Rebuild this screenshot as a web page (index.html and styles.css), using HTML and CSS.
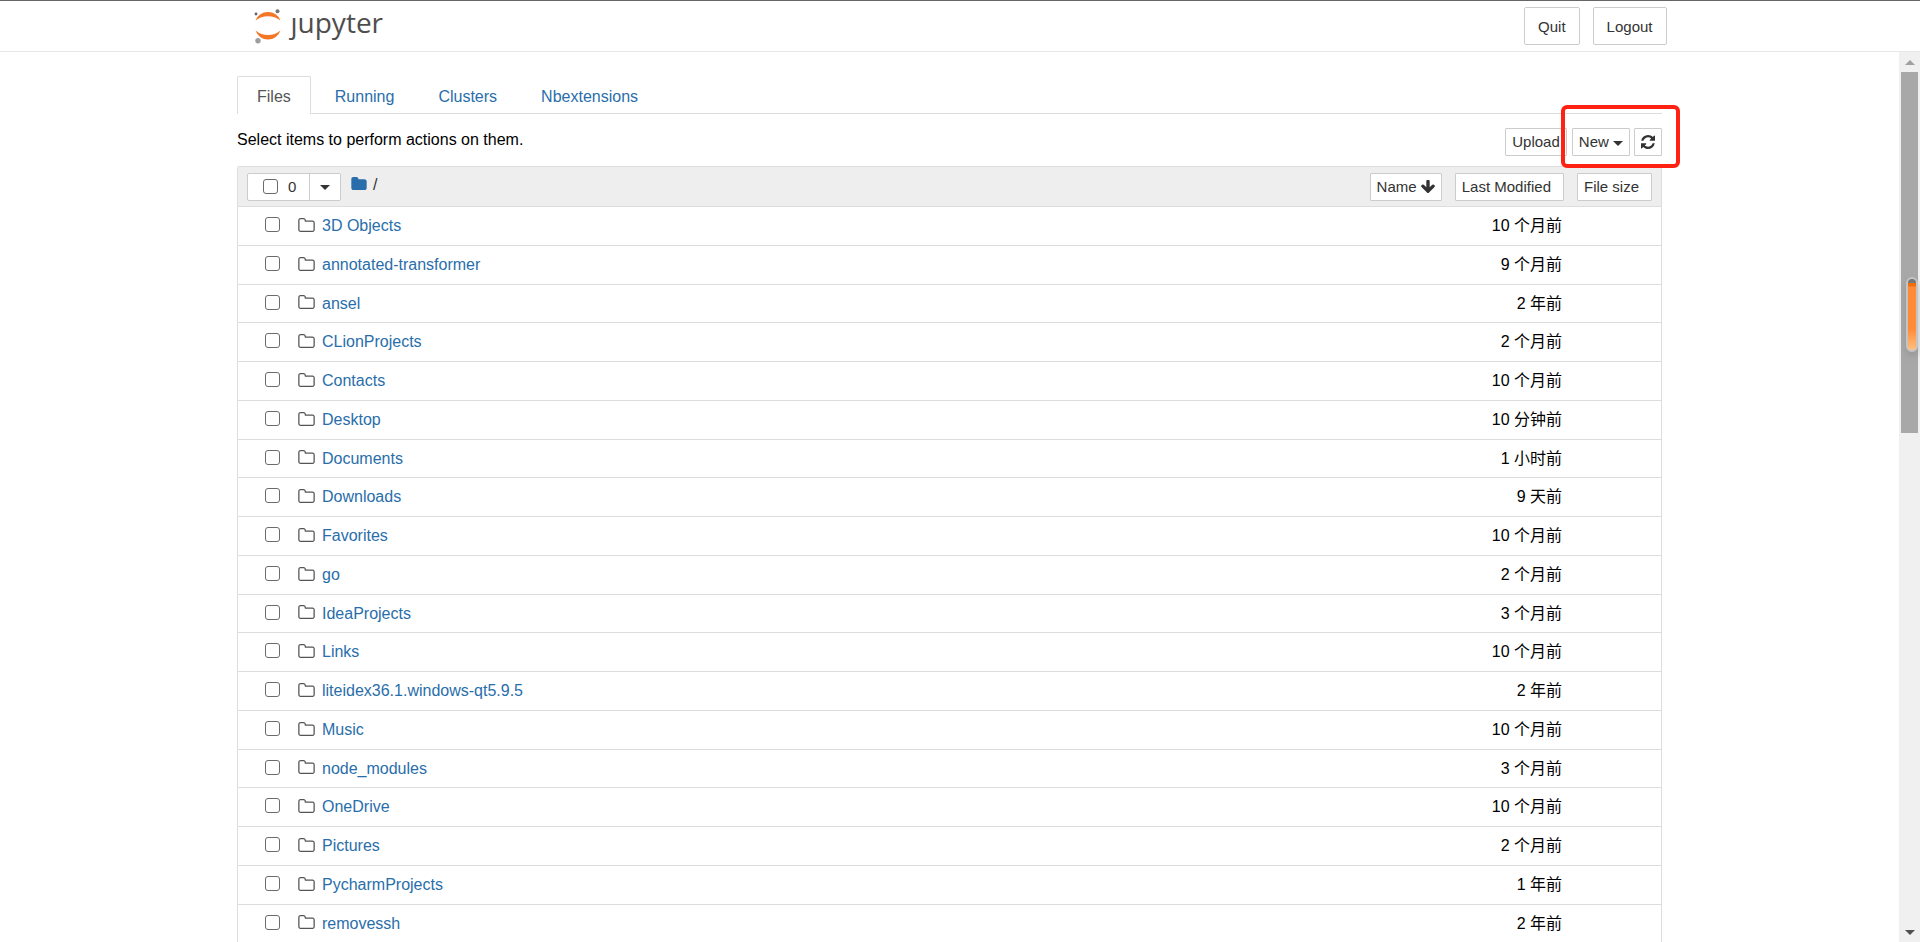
FILE: index.html
```html
<!DOCTYPE html>
<html lang="en">
<head>
<meta charset="utf-8">
<title>Home</title>
<link rel="stylesheet" href="styles.css">
</head>
<body>
<svg class="sprite" aria-hidden="true">
  <symbol id="folder-open" viewBox="64 128 1664 1408"><path d="M1600 1312v-704q0-40-28-68t-68-28h-704q-40 0-68-28t-28-68v-64q0-40-28-68t-68-28h-320q-40 0-68 28t-28 68v960q0 40 28 68t68 28h1216q40 0 68-28t28-68zm128-704v704q0 92-66 158t-158 66h-1216q-92 0-158-66t-66-158v-960q0-92 66-158t158-66h320q92 0 158 66t66 158v32h672q92 0 158 66t66 158z"/></symbol>
  <symbol id="folder-solid" viewBox="64 128 1664 1408"><path d="M1728 608v704q0 92-66 158t-158 66h-1216q-92 0-158-66t-66-158v-960q0-92 66-158t158-66h320q92 0 158 66t66 158v32h672q92 0 158 66t66 158z"/></symbol>
</svg>
<header class="header">
  <div class="header-inner">
    <a class="logo" href="#" aria-label="jupyter">
      <svg class="logo-mark" viewBox="0 0 28 36" aria-hidden="true">
        <path fill="#f37726" d="M1.500 12.500Q5 4 14 4t12.500 8.500Q21 8.200 14 8.200T1.500 12.500z"/>
        <path fill="#f37726" d="M1.500 22.500Q5 31.500 14 31.500t12.500-9Q21 27 14 27T1.500 22.500z"/>
        <circle fill="#767677" cx="23.500" cy="3.300" r="2"/>
        <circle fill="#616262" cx="2" cy="6" r="1.400"/>
        <circle fill="#9e9e9e" cx="4" cy="32.800" r="2.700"/>
      </svg>
      <span class="logo-text">ȷupyter</span>
    </a>
    <div class="header-actions">
      <button class="btn" type="button">Quit</button>
      <button class="btn" type="button">Logout</button>
    </div>
  </div>
</header>
<div class="site">
  <main class="content">
    <div class="container">
      <nav class="tabs">
        <a class="tab active" href="#">Files</a>
        <a class="tab" href="#">Running</a>
        <a class="tab" href="#">Clusters</a>
        <a class="tab" href="#">Nbextensions</a>
      </nav>
      <div class="toolbar">
        <p class="hint">Select items to perform actions on them.</p>
        <div class="toolbar-actions">
          <button class="btn-xs" type="button">Upload</button>
          <div class="highlighted">
            <button class="btn-xs" type="button">New <span class="caret"></span></button>
            <button class="btn-xs" type="button" aria-label="Refresh"><svg class="icon-refresh" viewBox="128 128 1536 1536"><path d="M1639 1056q0 5-1 7-64 268-268 434.500t-478 166.500q-146 0-282.500-55t-243.500-157l-129 129q-19 19-45 19t-45-19-19-45v-448q0-26 19-45t45-19h448q26 0 45 19t19 45-19 45l-137 137q71 66 161 102t187 36q134 0 250-65t186-179q11-17 53-117 8-23 30-23h192q13 0 22.500 9.500t9.500 22.500zm25-800v448q0 26-19 45t-45 19h-448q-26 0-45-19t-19-45 19-45l138-138q-148-137-349-137-134 0-250 65t-186 179q-11 17-53 117-8 23-30 23h-199q-13 0-22.500-9.500t-9.500-22.500v-7q65-268 270-434.500t480-166.500q146 0 284 55.500t245 156.500l130-129q19-19 45-19t45 19 19 45z"/></svg></button>
            <span class="marker"></span>
          </div>
        </div>
      </div>
      <div class="list">
        <div class="list-header">
          <div class="select-group">
            <label class="select-all"><input class="check" type="checkbox">0</label>
            <button class="select-menu" type="button" aria-label="Select menu"><span class="caret"></span></button>
          </div>
          <div class="breadcrumb"><a href="#" aria-label="Root"><svg class="icon-root"><use href="#folder-solid"/></svg></a><span>/</span></div>
          <div class="sorters">
            <button class="btn-xs" type="button">Name <svg class="icon-arrow" viewBox="117 128 1558 1483"><path d="M1675 832q0 53-37 90l-651 652q-39 37-91 37-53 0-90-37l-651-652q-38-36-38-90 0-53 38-91l74-75q39-37 91-37 53 0 90 37l294 294v-704q0-52 38-90t90-38h128q52 0 90 38t38 90v704l294-294q37-37 90-37 52 0 91 37l75 75q37 39 37 91z"/></svg></button>
            <button class="btn-xs wide" type="button">Last Modified</button>
            <button class="btn-xs wide" type="button">File size</button>
          </div>
        </div>
        <ul class="rows" id="rows"></ul>
      </div>
    </div>
  </main>
  <div class="scrollbar" aria-hidden="true">
    <span class="arrow up"></span>
    <div class="track"><div class="thumb"><span class="gauge"></span></div></div>
    <span class="arrow down"></span>
  </div>
</div>
<script src="app.js"></script>
</body>
</html>
```

FILE: app.js
```js
const files = [
  ["3D Objects", "10 个月前"],
  ["annotated-transformer", "9 个月前"],
  ["ansel", "2 年前"],
  ["CLionProjects", "2 个月前"],
  ["Contacts", "10 个月前"],
  ["Desktop", "10 分钟前"],
  ["Documents", "1 小时前"],
  ["Downloads", "9 天前"],
  ["Favorites", "10 个月前"],
  ["go", "2 个月前"],
  ["IdeaProjects", "3 个月前"],
  ["Links", "10 个月前"],
  ["liteidex36.1.windows-qt5.9.5", "2 年前"],
  ["Music", "10 个月前"],
  ["node_modules", "3 个月前"],
  ["OneDrive", "10 个月前"],
  ["Pictures", "2 个月前"],
  ["PycharmProjects", "1 年前"],
  ["removessh", "2 年前"]
];
document.getElementById("rows").innerHTML = files.map(([name, time]) => `
  <li class="row">
    <input class="check" type="checkbox" aria-label="${name}">
    <svg class="icon-folder"><use href="#folder-open"/></svg>
    <a class="name" href="#">${name}</a>
    <span class="time" lang="zh-CN">${time}</span>
  </li>`).join("");
```

FILE: styles.css
```css
* { box-sizing: border-box; }

body {
  margin: 0;
  height: 100vh;
  display: flex;
  flex-direction: column;
  overflow: hidden;
  background: #fff;
  color: #000;
  font: 16px/22px "Liberation Sans", Arial, "Noto Sans CJK SC", sans-serif;
}

a { color: #296eaa; text-decoration: none; }
button { font-family: inherit; color: #333; cursor: pointer; }
.sprite { display: none; }

.header {
  flex: none;
  border-top: 1px solid #666;
  border-bottom: 1px solid #e7e7e7;
}
.header-inner {
  max-width: 1413px;
  height: 50px;
  margin: 0 auto;
  display: flex;
  justify-content: space-between;
  align-items: center;
}
.logo { display: flex; gap: 9px; color: #4e4e4e; }
.logo-mark { width: 28px; height: 36px; }
.logo-text { font: 28px/28px "Open Sans", "Noto Sans", sans-serif; }
.header-actions { display: flex; gap: 13px; }

.btn {
  height: 38px;
  padding: 0 13px;
  border: 1px solid #ccc;
  border-radius: 2px;
  background: #fff;
  font-size: 15px;
}
.btn-xs {
  height: 28px;
  padding: 0 6px;
  border: 1px solid #ccc;
  border-radius: 1px;
  background: #fff;
  font-size: 15px;
  line-height: 22px;
}
.wide { padding-right: 12px; }

.site { flex: 1; min-height: 0; display: flex; }
.content { flex: 1; min-width: 0; overflow: hidden; }
.container { max-width: 1425px; margin: 0 auto; padding-top: 24px; }

.tabs { display: flex; gap: 4px; border-bottom: 1px solid #ddd; }
.tab {
  padding: 9px 19px 5px;
  border: 1px solid transparent;
  border-bottom: 0;
  border-radius: 2px 2px 0 0;
}
.active {
  margin-bottom: -1px;
  padding-bottom: 6px;
  border-color: #ddd;
  background: #fff;
  color: #555;
}

.toolbar {
  height: 52px;
  display: flex;
  justify-content: space-between;
  align-items: center;
}
.hint { margin: 0; }
.toolbar-actions { display: flex; gap: 5px; padding-top: 4px; }
.highlighted { position: relative; display: flex; gap: 4px; }
.marker {
  position: absolute;
  inset: -23px -18px -12px -11px;
  border: 4px solid #ff2213;
  border-radius: 6px;
  pointer-events: none;
}

.caret {
  display: inline-block;
  vertical-align: middle;
  border: 5px solid transparent;
  border-top-color: #333;
  border-bottom: 0;
}
.icon-refresh { display: block; width: 14px; height: 14px; fill: #333; }
.icon-arrow { width: 14px; height: 13px; fill: #333; vertical-align: -1px; }

.list { border: 1px solid #ddd; border-radius: 2px; }
.list-header {
  height: 40px;
  padding: 0 9px;
  display: flex;
  align-items: center;
  background: #eee;
  border-bottom: 1px solid #ddd;
}
.select-group {
  display: flex;
  height: 28px;
  border: 1px solid #ccc;
  border-radius: 2px;
  background: #fff;
}
.select-all {
  width: 61px;
  padding-left: 15px;
  display: flex;
  align-items: center;
  gap: 10px;
  color: #333;
  font-size: 15px;
}
.select-menu {
  width: 31px;
  padding: 0;
  border: 0;
  border-left: 1px solid #ccc;
  background: none;
}
.breadcrumb { display: flex; gap: 6px; margin-left: 10px; padding-bottom: 4px; color: #333; }
.icon-root { width: 16px; height: 13px; fill: #296eaa; }
.sorters { margin-left: auto; display: flex; gap: 13px; }

.check {
  appearance: none;
  flex: none;
  width: 15px;
  height: 15px;
  margin: 0;
  border: 1px solid #6b6b6b;
  border-radius: 3px;
  background: #fff;
}

.rows { margin: 0; padding: 0; list-style: none; }
.row {
  height: 39px;
  padding: 0 99px 0 27px;
  display: flex;
  align-items: center;
  border-bottom: 1px solid #ddd;
}
.row:nth-child(4n + 3) { height: 38px; }
.row .check { margin-bottom: 3px; }
.icon-folder {
  width: 17px;
  height: 14px;
  margin: 0 7px 3px 18px;
  fill: #555;
}
.time { margin-left: auto; }

.scrollbar {
  width: 21px;
  display: flex;
  flex-direction: column;
  align-items: center;
  background: #f0f0f0;
}
.arrow {
  height: 20px;
  display: flex;
  align-items: center;
}
.arrow::before { content: ""; border: 5px solid transparent; }
.up::before { border-top: 0; border-bottom-color: #a0a0a0; }
.down::before { border-bottom: 0; border-top-color: #505050; }
.track { flex: 1; width: 17px; }
.thumb { position: relative; height: 42.5%; background: #a8a8a8; }
.gauge {
  position: absolute;
  top: 205px;
  right: 0;
  width: 12px;
  height: 75px;
  border: 2px solid #c4c4c4;
  border-radius: 6px;
  background: linear-gradient(#777 0 4px, #f07010 4px 7px, #ff8a38 8px 70%, #ffc080);
  box-shadow: 0 4px 6px #8888;
}
```
